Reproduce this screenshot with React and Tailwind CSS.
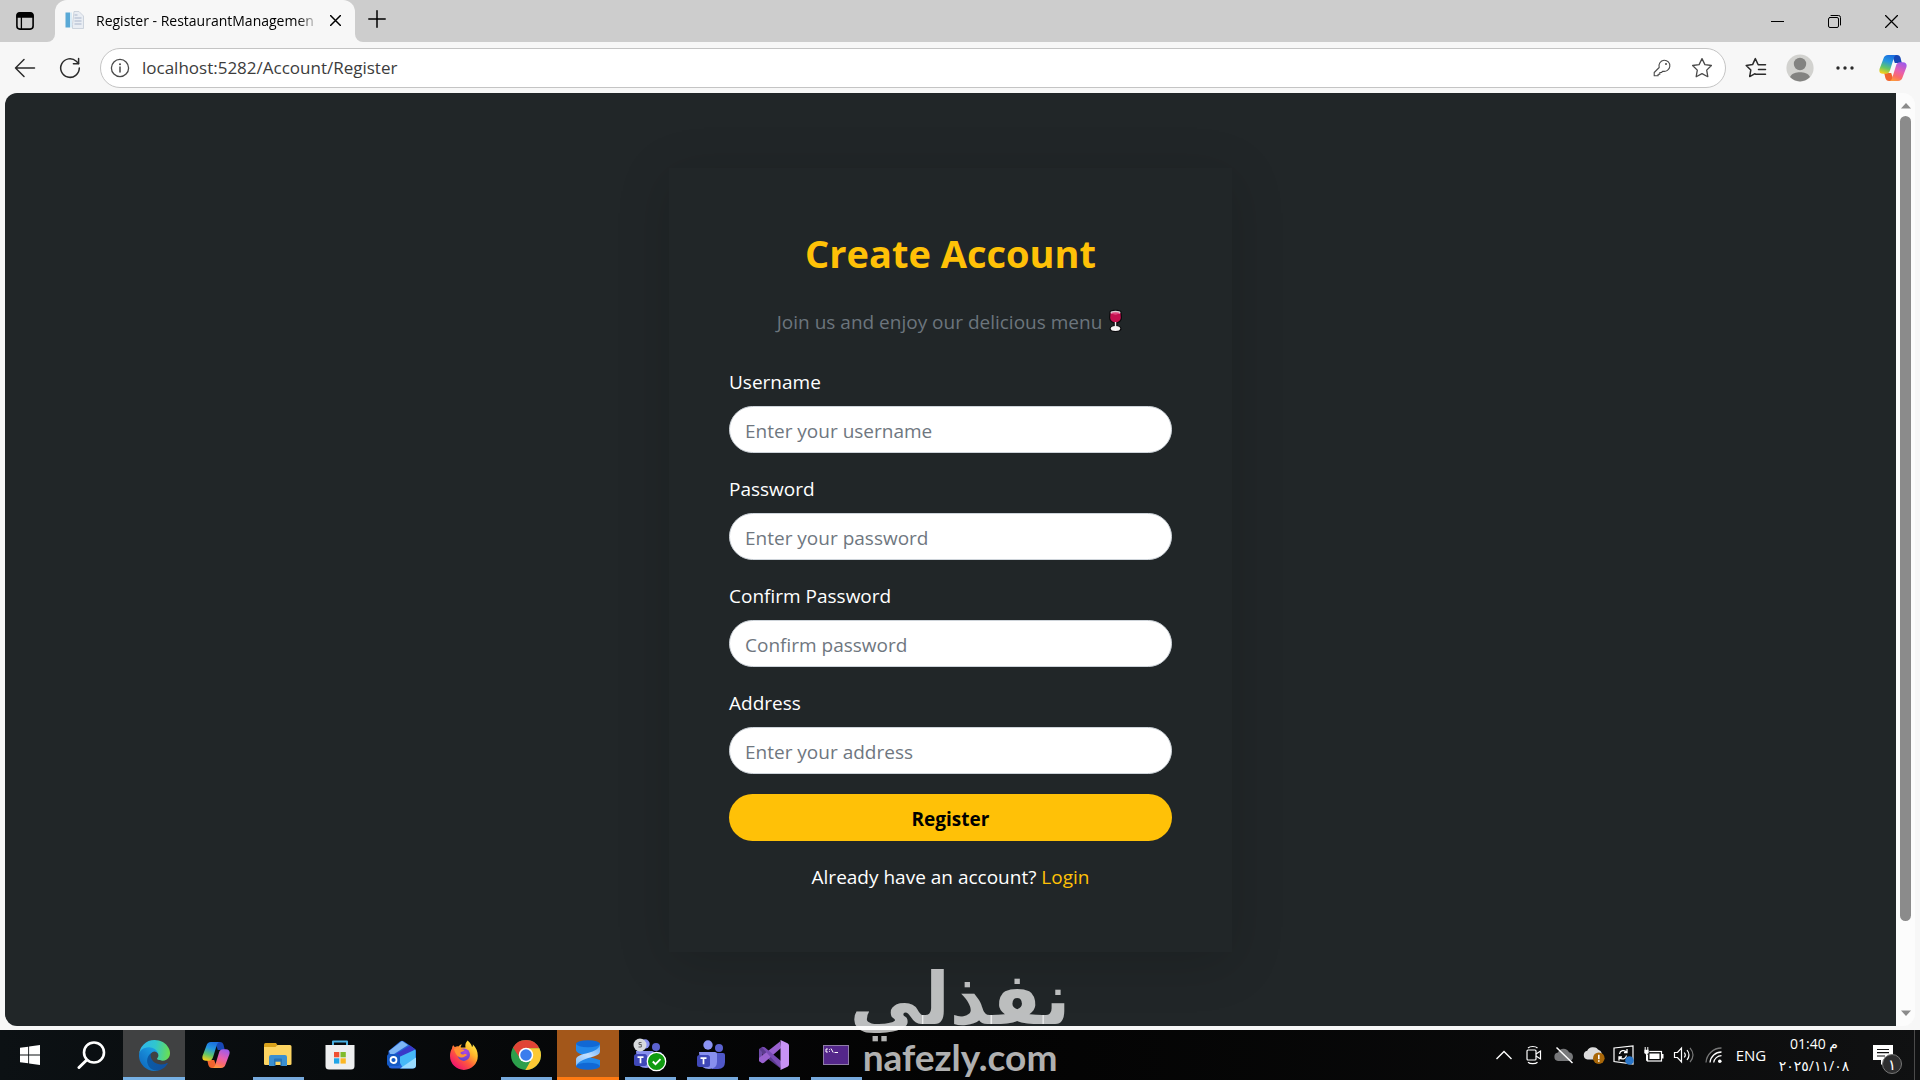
import React from "react";

/* ---------- browser icons ---------- */

const line = { fill: "none", stroke: "currentColor", strokeLinecap: "round", strokeLinejoin: "round" };

const TabActionsIcon = () => (
  <svg width="20" height="20" viewBox="0 0 20 20">
    <rect x="1.9" y="1.9" width="16.2" height="16.2" rx="3" {...line} strokeWidth="1.6" />
    <path d="M1.5 6.8V5a3.6 3.6 0 0 1 3.6-3.6h9.8A3.6 3.6 0 0 1 18.500 5v1.800z" fill="currentColor" />
    <path d="M6.400 6v12" {...line} strokeWidth="1.300" />
  </svg>
);

const Favicon = () => (
  <svg width="20" height="20" viewBox="0 0 20 20">
    <rect x="0.500" y="2.500" width="4.500" height="15" fill="#5aa9d6" />
    <rect x="5" y="2.500" width="2" height="15" fill="#d7ebf7" />
    <path d="M9 1.500h5l4.500 4.500v12.500h-11v-4z" fill="#e9edf3" stroke="#c3cad6" strokeWidth="0.800" />
    <path d="M9.500 5h3M9.500 8h7M9.500 11h7M9.500 14h7" stroke="#a9b6cc" strokeWidth="1.200" />
  </svg>
);

const CloseIcon = ({ size = 11, width = 1.6 }) => (
  <svg width={size} height={size} viewBox="0 0 12 12">
    <path d="M0.500 0.500l11 11M11.500 0.500l-11 11" {...line} strokeWidth={width} />
  </svg>
);

const PlusIcon = () => (
  <svg width="18" height="18" viewBox="0 0 18 18">
    <path d="M9 0.800v16.400M0.800 9h16.400" {...line} strokeWidth="1.500" />
  </svg>
);

const BackIcon = () => (
  <svg width="22" height="20" viewBox="0 0 22 20">
    <path d="M10 1.500L1.500 10l8.500 8.500M1.500 10h19" {...line} strokeWidth="1.500" />
  </svg>
);

const ReloadIcon = () => (
  <svg width="22" height="22" viewBox="0 0 22 22">
    <path d="M20.300 11a9.300 9.300 0 1 1-3-6.800l2.200 2.300" {...line} strokeWidth="1.500" />
    <path d="M19.600 1.500v5.200h-5.200" {...line} strokeWidth="1.500" />
  </svg>
);

const InfoIcon = () => (
  <svg width="20" height="20" viewBox="0 0 20 20">
    <circle cx="10" cy="10" r="8.600" {...line} strokeWidth="1.300" />
    <path d="M10 9v5" {...line} strokeWidth="1.500" />
    <circle cx="10" cy="6.300" r="1" fill="currentColor" />
  </svg>
);

const KeyIcon = () => (
  <svg width="18" height="18" viewBox="0 0 18 18">
    <path
      d="M11 1.200a5.600 5.600 0 1 1-1.200 11l-1.300 1.300H6.800v1.700H5.100v1.600H1.200v-3.300l5-5A5.700 5.700 0 0 1 11 1.200z"
      {...line}
      strokeWidth="1.100"
    />
    <circle cx="13" cy="5" r="1" fill="currentColor" />
  </svg>
);

const StarIcon = () => (
  <svg width="22" height="22" viewBox="0 0 22 22">
    <path
      d="M11 1.600l2.900 6 6.500.9-4.700 4.600 1.100 6.600L11 16.600l-5.800 3.100 1.100-6.600L1.600 8.500l6.500-.9z"
      {...line}
      strokeWidth="1.300"
    />
  </svg>
);

const FavoritesIcon = () => (
  <svg width="22" height="22" viewBox="0 0 22 22">
    <path
      d="M13.200 7.800L10.300 1.600 7.600 7.600l-6.400.9 4.600 4.500-1.100 6.600 5.300-2.900M13.200 7.800h7.300M13.500 12.500h7M10.500 17.200h10"
      {...line}
      strokeWidth="1.500"
    />
  </svg>
);

const AvatarIcon = () => (
  <svg width="28" height="28" viewBox="0 0 28 28">
    <circle cx="14" cy="14" r="13.600" fill="#d2d2cf" />
    <circle cx="14" cy="10" r="6.200" fill="#838381" />
    <path d="M4 23c2-4 6-4.800 10-4.800s8 .8 10 4.800a13.600 13.600 0 0 1-20 0z" fill="#838381" />
  </svg>
);

const CopilotIcon = ({ id, size = 28 }) => (
  <svg width={size} height={size} viewBox="0 0 28 28">
    <defs>
      <linearGradient id={id + "a"} x1="0.600" y1="0" x2="0.300" y2="1">
        <stop offset="0" stopColor="#1b6fe0" />
        <stop offset="0.350" stopColor="#2497e0" />
        <stop offset="0.700" stopColor="#62c667" />
        <stop offset="1" stopColor="#f4cf1c" />
      </linearGradient>
      <linearGradient id={id + "b"} x1="0.700" y1="0" x2="0.300" y2="1">
        <stop offset="0" stopColor="#a05be8" />
        <stop offset="0.450" stopColor="#e75fb0" />
        <stop offset="0.750" stopColor="#fb6a6a" />
        <stop offset="1" stopColor="#fb9a3c" />
      </linearGradient>
    </defs>
    <path d="M13 1h5c2 0 3 1 3.600 3l1.200 5h-7z" fill="#1747b5" />
    <path d="M15 27h-5c-2 0-3-1-3.600-3l-1.200-5h7z" fill="#f0642e" />
    <path d="M9 1H18c-2 .2-2.700 1.400-3.200 3l-3.700 12c-.7 2.400-1.800 3.700-4.300 3.700H4c-3 0-4.200-2-3.400-5L4.400 4.800C5.200 2.200 6.500 1 9 1z" fill={`url(#${id}a)`} />
    <path d="M19 27H10c2-.2 2.700-1.400 3.200-3l3.700-12c.7-2.400 1.800-3.700 4.300-3.700H24c3 0 4.200 2 3.400 5l-3.800 9.900c-.8 2.600-2.100 3.800-4.600 3.800z" fill={`url(#${id}b)`} />
  </svg>
);

const WineIcon = () => (
  <svg className="inline-block align-[-4px]" width="17" height="24" viewBox="0 0 14 24">
    <path d="M1 2.500C2 .3 12 .3 13 2.500l.5 6c0 3-2 5-4.500 5.800v2.200c2.300.4 4 1.700 4 3.500 0 4-12 4-12 0 0-1.800 1.700-3.100 4-3.500v-2.200C2.500 13.500.5 11.500.5 8.500z" fill="#0b0b0d" />
    <path d="M2 4h10l.3 4.500c0 3-2.500 4.800-5.300 4.800S1.700 11.500 1.700 8.500z" fill="#c4104f" />
    <ellipse cx="7" cy="3.500" rx="5" ry="1.700" fill="#d9cfd4" />
    <ellipse cx="7" cy="4.200" rx="3.800" ry="1" fill="#e2427c" />
    <path d="M6.300 13h1.400v5H6.300z" fill="#eee" />
    <ellipse cx="7" cy="19.600" rx="4.700" ry="2.500" fill="#f6f4f5" />
  </svg>
);

/* ---------- taskbar icons ---------- */

const WindowsIcon = () => (
  <svg width="20" height="20" viewBox="0 0 20 20" fill="#fff">
    <path d="M0 2.800L8.200 1.700v7.800H0zM9.100 1.500L20 0v9.500H9.100zM0 10.400h8.200v7.900L0 17.200zM9.100 10.400H20V20L9.100 18.500z" />
  </svg>
);

const SearchIcon = () => (
  <svg width="30" height="30" viewBox="0 0 30 30">
    <circle cx="17" cy="12.500" r="10" fill="none" stroke="#fff" strokeWidth="2.600" />
    <path d="M9.700 20L2 27.500" stroke="#fff" strokeWidth="3" strokeLinecap="round" />
  </svg>
);

const EdgeIcon = () => (
  <svg width="31" height="31" viewBox="0 0 256 256">
    <defs>
      <linearGradient id="edgeA" x1="0.200" y1="0.500" x2="1" y2="0.500">
        <stop offset="0" stopColor="#0c59a4" />
        <stop offset="1" stopColor="#1150a0" />
      </linearGradient>
      <linearGradient id="edgeB" x1="0.800" y1="0.200" x2="0.200" y2="1">
        <stop offset="0" stopColor="#1b9de2" />
        <stop offset="0.500" stopColor="#1580d0" />
        <stop offset="1" stopColor="#0d69bd" />
      </linearGradient>
      <linearGradient id="edgeC" x1="0" y1="0.500" x2="1" y2="0.600">
        <stop offset="0" stopColor="#2fb5ec" />
        <stop offset="0.500" stopColor="#30c6ce" />
        <stop offset="1" stopColor="#6be04d" />
      </linearGradient>
    </defs>
    <path fill="url(#edgeA)" d="M231 190.500c-3.400 1.800-6.900 3.400-10.500 4.700a101.900 101.900 0 0 1-35.900 6.400c-47.300 0-88.500-32.500-88.500-74.300 0-11.400 6.400-21.900 16.400-27.300-42.800 1.800-53.800 46.400-53.800 72.500 0 73.900 68.100 81.400 82.800 81.400 7.900 0 19.800-2.300 27-4.600l1.300-.4a128.300 128.300 0 0 0 66.600-52.800c1.200-1.900.6-4.300-1.200-5.500-1.300-.8-2.900-.9-4.200-.1z" />
    <path fill="url(#edgeB)" d="M105.700 241.400a79.200 79.200 0 0 1-22.700-21.300 80.700 80.700 0 0 1 29.500-120.700c3.100-1.500 8.400-4 15.500-3.900a32.400 32.400 0 0 1 25.700 13 31.900 31.900 0 0 1 6.300 18.700c0-.2 24.500-79.600-80-79.600-43.900 0-80 41.700-80 78.200 0 19.400 4.100 38.500 12.400 56a128 128 0 0 0 156 67.100 75.600 75.600 0 0 1-62.700-7.500z" />
    <path fill="url(#edgeC)" d="M152.300 148.900c-.8 1-3.300 2.500-3.300 5.600 0 2.600 1.700 5.100 4.700 7.200 14.400 10 41.500 8.700 41.600 8.700 10.700 0 21.100-2.900 30.300-8.300a61.400 61.400 0 0 0 30.400-52.900c.3-22.400-8-37.300-11.300-43.900C223.500 24 177.700 0 128 0A128 128 0 0 0 0 126.200c.5-36.500 36.800-66 80-66 3.500 0 23.500.3 42 10 16.300 8.600 24.900 19 30.900 29.300 6.200 10.700 7.300 24.200 7.300 29.500s-2.700 13.400-7.900 19.900z" />
  </svg>
);

const ExplorerIcon = () => (
  <svg width="28" height="26" viewBox="0 0 28 26">
    <path d="M0 2.500Q0 1 1.500 1H12l2 3-2 3H0z" fill="#d9a21b" />
    <path d="M0 5h11.500l2-2H26q1.500 0 1.500 1.500V22q0 1-1.500 1H1.500Q0 23 0 22z" fill="#fcd462" />
    <path d="M5 24V15q0-2 2-2h14q2 0 2 2v9h-5v-4.500h-8V24z" fill="#3b8fd0" />
    <path d="M10 24v-6.500q0-1 1-1h6q1 0 1 1V24h-1.500v-4.500h-5V24z" fill="#2774b8" />
  </svg>
);

const StoreIcon = () => (
  <svg width="30" height="30" viewBox="0 0 30 30">
    <path d="M8 7V1.500h14V7" fill="none" stroke="#49b1e4" strokeWidth="2" strokeLinejoin="round" />
    <path d="M0.500 5h29v21q0 3.500-3.500 3.500H4Q.5 29.500.5 26z" fill="#eeeff0" />
    <path d="M9 12h5.300v5.300H9z" fill="#f05033" />
    <path d="M15.500 12h5.300v5.300h-5.300z" fill="#7fbb2b" />
    <path d="M9 18.300h5.300v5.300H9z" fill="#1fa5e8" />
    <path d="M15.500 18.300h5.300v5.300h-5.300z" fill="#fcb724" />
  </svg>
);

const OutlookIcon = () => (
  <svg width="30" height="30" viewBox="0 0 30 30">
    <path d="M1.500 11L13 1.500q2-1.500 4 0L28 9q1 1 1 2.500V25q0 3.500-3.500 3.500H5Q1.500 28.500 1.500 25z" fill="#2563d9" />
    <path d="M2 11L15 1l6 4L4 16z" fill="#7db6f5" />
    <path d="M4 17L23 5.500l5 3.700L13 20z" fill="#3939c8" />
    <path d="M10 18L28.500 9.500V21L16 28z" fill="#46b9f7" />
    <path d="M13 28.500L29 17.500V25q0 3.500-3.500 3.500z" fill="#9adcff" />
    <rect x="0" y="14" width="13" height="12" rx="2.500" fill="#1459c4" />
    <circle cx="6.500" cy="20" r="3" fill="none" stroke="#fff" strokeWidth="1.800" />
  </svg>
);

const FirefoxIcon = () => (
  <svg width="30" height="30" viewBox="0 0 30 30">
    <defs>
      <linearGradient id="ffA" x1="0.900" y1="0.050" x2="0.200" y2="0.900">
        <stop offset="0" stopColor="#fff44f" />
        <stop offset="0.350" stopColor="#ffb52b" />
        <stop offset="0.650" stopColor="#ff5a3c" />
        <stop offset="1" stopColor="#f0156d" />
      </linearGradient>
      <radialGradient id="ffB" cx="0.600" cy="0.300" r="0.700">
        <stop offset="0" stopColor="#b247e0" />
        <stop offset="1" stopColor="#5b43d0" />
      </radialGradient>
    </defs>
    <path d="M18.500 0.500c3 2.300 4.200 4.600 4.500 6.500 1-.5 1-1.600.8-2.700 3.500 3.500 5 7.500 5 11.700A13.900 13.900 0 0 1 1 16c0-3.500.8-5.500 2-7.500.1-1.500.6-2.600 1.300-3.500.3 1 1 1.800 1.800 2.100.8-.6 2-.9 3.500-.7C11 4.500 12 4.300 13 4.500c-1 1-1.400 2-1.200 2.900h4.700c-.5-2.300 0-4.800 2-6.900z" fill="url(#ffA)" />
    <circle cx="14.800" cy="14.700" r="6.200" fill="url(#ffB)" />
    <path d="M5 9c2.500-1.500 5-1.400 7 .2 1.500 0 3 .2 3.500.8-.5 1.600-3.500 1.700-4 2.600-.3 1.500 1.500 2.400 3.500 1.600 1.300-.4 2.600 0 3 1-1.600.5-3 2.700-6 2.300-4-.5-6-4.500-7-8.500z" fill="#ff9132" />
  </svg>
);

const ChromeIcon = () => (
  <svg width="30" height="30" viewBox="0 0 48 48">
    <circle cx="24" cy="24" r="24" fill="#2c9f4b" />
    <path d="M24 13h21.300A24 24 0 0 0 3.300 12l11.200 17.500z" fill="#e04435" />
    <path d="M45.300 13A24 24 0 0 1 23 48l10.500-18.500L24 13z" fill="#fcc934" />
    <circle cx="24" cy="24" r="11.600" fill="#fff" />
    <circle cx="24" cy="24" r="9.200" fill="#3b7ded" />
  </svg>
);

const ZIcon = () => (
  <svg width="24" height="30" viewBox="0 0 24 30">
    <defs>
      <linearGradient id="zBand" x1="0" y1="1" x2="1" y2="0">
        <stop offset="0" stopColor="#7fbcf9" />
        <stop offset="0.500" stopColor="#c3e0ff" />
        <stop offset="1" stopColor="#5fa9f5" />
      </linearGradient>
    </defs>
    <path d="M0 3.500V10c0 2.500 5 4.500 12 6.500S24 20 24 20v6.500H0V20l12-4.500L24 10V3.500z" fill="#2388ea" />
    <ellipse cx="12" cy="3.700" rx="12" ry="3.500" fill="#1168d4" />
    <ellipse cx="12" cy="26.300" rx="12" ry="3.500" fill="#1168d4" />
    <path d="M24 5v6.500c0 5-11 5.500-17 8.500-3.500 1.600-6 3.500-7 6V19.500c0-4.500 9-5.500 15-7.500 4.500-1.600 8-3.500 9-7z" fill="url(#zBand)" />
  </svg>
);

const TeamsShape = () => (
  <>
    <circle cx="22" cy="8" r="4" fill="#5b62cf" />
    <path d="M15 13h11q2 0 2 2v7q0 7-7 7h-6z" fill="#5058c8" />
    <circle cx="11" cy="5" r="4.700" fill="#8b93f2" />
    <path d="M2 12h16q2 0 2 2v8q0 7-8 7T3 22z" fill="#8890ee" />
    <rect x="0" y="15" width="13" height="12" rx="2.500" fill="#3f48b8" />
    <path d="M3.500 18.200h6M6.500 18.200v6" stroke="#fff" strokeWidth="1.700" />
  </>
);

const TeamsIcon = () => (
  <svg width="30" height="30" viewBox="0 0 30 30">
    <TeamsShape />
  </svg>
);

const TeamsStatusIcon = () => (
  <svg width="34" height="34" viewBox="0 0 34 34">
    <g transform="translate(1 1)">
      <TeamsShape />
    </g>
    <circle cx="7" cy="7" r="6.500" fill="#d8dadd" />
    <path d="M8.500 4.500H6v2h2.300v2.500H5.500" fill="none" stroke="#555" strokeWidth="0.900" />
    <circle cx="23.500" cy="23.500" r="9.200" fill="#109b10" stroke="#fff" strokeWidth="1.300" />
    <path d="M19.800 23.500l2.700 2.700 5-5" fill="none" stroke="#fff" strokeWidth="1.900" />
  </svg>
);

const VisualStudioIcon = () => (
  <svg width="30" height="30" viewBox="0 0 30 30">
    <path d="M0 9l3-2q1-.5 2 .3L22 22l-1 6L0 12z" fill="#5b3a8e" />
    <path d="M0 9v12l3 2V12z" fill="#6e4aa8" />
    <path d="M0 21l3 2q1 .5 2-.3L22 8l-1-6.500L0 18z" fill="#9a62d0" />
    <path d="M3 7.500L21.500 28 22 21 6 7.500Q4.500 6.500 3 7.500z" fill="#7a4cb5" />
    <path d="M21.500 0l7 3.300q1.500.7 1.500 2.200v19q0 1.500-1.500 2.200l-7 3.300z" fill="#c893f5" />
  </svg>
);

const TerminalIcon = () => (
  <svg width="26" height="20" viewBox="0 0 26 20">
    <rect x="0.500" y="0.500" width="25" height="19" fill="#54278a" stroke="#8f7da6" />
    <path d="M4.800 4H3v3h1.800M6.500 4.300v.8M6.500 6.200v.8M8 3.500l2.200 4M11.500 7.500h3.500" stroke="#fff" fill="none" />
  </svg>
);

/* ---------- tray icons ---------- */

const ChevronIcon = () => (
  <svg width="18" height="12" viewBox="0 0 18 12">
    <path d="M1.500 10L9 2.500l7.500 7.500" fill="none" stroke="#fff" strokeWidth="1.400" />
  </svg>
);

const MeetNowIcon = () => (
  <svg width="18" height="20" viewBox="0 0 18 20" fill="none" stroke="#fff" strokeWidth="1.200">
    <rect x="2" y="5" width="9" height="10" rx="1" />
    <path d="M11 9l4.500-3v8L11 11M3 3c2-2 7.500-2 9.500 0M3 17.200c2 1.900 7.500 1.900 9.500 0" />
  </svg>
);

const CloudOffIcon = () => (
  <svg width="22" height="18" viewBox="0 0 22 18">
    <path d="M5 15a4.300 4.300 0 0 1 0-8.500A6 6 0 0 1 16 6.300 4.500 4.500 0 0 1 17 15z" fill="#77787a" />
    <path d="M3.500 1.500l16 15.500" stroke="#fff" strokeWidth="1.500" />
  </svg>
);

const CloudWarnIcon = () => (
  <svg width="24" height="20" viewBox="0 0 24 20">
    <path d="M5.500 14.500a4.500 4.500 0 0 1-.3-8.800A6.500 6.500 0 0 1 16 4.500q3 1 4 4l-6 6z" fill="#dcdcdc" />
    <circle cx="16.800" cy="13.200" r="5.800" fill="#a96708" />
    <path d="M16.800 9.700v4.500M16.800 15.200v1.600" stroke="#fff" strokeWidth="1.600" />
  </svg>
);

const UpdateIcon = () => (
  <svg width="22" height="20" viewBox="0 0 22 20">
    <path d="M1 3l19-2v18L1 16.500z" fill="none" stroke="#fff" strokeWidth="1.200" />
    <path d="M6.500 9a4 4 0 0 1 7-2M14 4v3.500h-3M13.500 10.500a4 4 0 0 1-7 2M6 15.500V12h3" fill="none" stroke="#fff" strokeWidth="1.300" />
    <circle cx="16.500" cy="15.500" r="4.300" fill="#2b77c9" />
  </svg>
);

const BatteryIcon = () => (
  <svg width="22" height="16" viewBox="0 0 22 16">
    <rect x="4.500" y="4.500" width="14" height="9.500" fill="none" stroke="#fff" strokeWidth="1.200" />
    <path d="M6.500 6.500h10v5.500h-10zM19 7h1.500v4.500H19z" fill="#fff" />
    <path d="M1 2.500h5v3q0 2-2.500 2T1 5.500z" fill="#fff" stroke="#0b0c0d" strokeWidth="0.600" />
    <path d="M2.200 0v3M4.800 0v3M3.500 7v6.500h1" stroke="#fff" fill="none" />
  </svg>
);

const VolumeIcon = () => (
  <svg width="22" height="18" viewBox="0 0 22 18" fill="none" stroke="#fff" strokeWidth="1.200">
    <path d="M1.500 6.500h3l4-4.500v14l-4-4.500h-3z" />
    <path d="M11.300 6.500q2 2.500 0 5M14 4q4 5 0 10" />
    <path d="M17 1.800q6 7.200 0 14.400" stroke="#777" />
  </svg>
);

const WifiIcon = () => (
  <svg width="18" height="18" viewBox="0 0 18 18" fill="none" strokeWidth="1.300">
    <path d="M1 16.500A15.500 15.500 0 0 1 16.500 2" stroke="#777" />
    <path d="M5 16.500A11.500 11.500 0 0 1 16.500 6M8.700 16.500a7.800 7.800 0 0 1 7.800-6.800" stroke="#fff" />
    <circle cx="14.800" cy="15.200" r="1.800" fill="#fff" />
  </svg>
);

const NotificationIcon = () => (
  <svg width="20" height="20" viewBox="0 0 20 20">
    <path d="M0 0h20v15h-7l-5 5v-5H0z" fill="#fff" />
    <path d="M4 4.500h12M4 7.700h12M4 11h8" stroke="#111" strokeWidth="1.200" />
  </svg>
);

/* ---------- data ---------- */

const fields = [
  { id: "username", label: "Username", placeholder: "Enter your username", type: "text" },
  { id: "password", label: "Password", placeholder: "Enter your password", type: "password" },
  { id: "confirm", label: "Confirm Password", placeholder: "Confirm password", type: "password" },
  { id: "address", label: "Address", placeholder: "Enter your address", type: "text" },
];

const apps = [
  { name: "Start", icon: <WindowsIcon /> },
  { name: "Search", icon: <SearchIcon /> },
  { name: "Edge", icon: <EdgeIcon />, state: "active" },
  { name: "Copilot", icon: <CopilotIcon id="task" /> },
  { name: "File Explorer", icon: <ExplorerIcon />, state: "open" },
  { name: "Store", icon: <StoreIcon /> },
  { name: "Outlook", icon: <OutlookIcon /> },
  { name: "Firefox", icon: <FirefoxIcon /> },
  { name: "Chrome", icon: <ChromeIcon />, state: "open" },
  { name: "Z", icon: <ZIcon />, state: "alert" },
  { name: "Teams (work)", icon: <TeamsStatusIcon />, state: "open" },
  { name: "Teams", icon: <TeamsIcon />, state: "open" },
  { name: "Visual Studio", icon: <VisualStudioIcon />, state: "open" },
  { name: "Command Prompt", icon: <TerminalIcon />, state: "open" },
];

const tray = [
  { name: "Show hidden icons", icon: <ChevronIcon /> },
  { name: "Meet now", icon: <MeetNowIcon /> },
  { name: "Cloud paused", icon: <CloudOffIcon /> },
  { name: "Cloud warning", icon: <CloudWarnIcon /> },
  { name: "Updates", icon: <UpdateIcon /> },
  { name: "Battery", icon: <BatteryIcon /> },
  { name: "Volume", icon: <VolumeIcon /> },
  { name: "Network", icon: <WifiIcon /> },
];

/* ---------- sections ---------- */

function TabStrip() {
  return (
    <header className="flex h-[42px] shrink-0 items-stretch bg-[#cdcdcd] text-black">
      <div className="flex w-[55px] bg-[#f7f7f7]">
        <button aria-label="Tab actions" className="flex w-full items-center justify-center rounded-br-lg bg-[#cdcdcd] pr-[6px]">
          <TabActionsIcon />
        </button>
      </div>
      <div className="bg-[#cdcdcd]">
        <div className="flex h-full w-[300px] items-center rounded-t-xl bg-[#f7f7f7] pr-[10px] pb-[2px] pl-[10px]">
          <Favicon />
          <span className="ml-[11px] w-[224px] overflow-hidden text-[14px] whitespace-nowrap [mask-image:linear-gradient(to_right,black_90%,transparent)]">
            Register - RestaurantManagemen
          </span>
          <button aria-label="Close tab" className="ml-auto flex size-5 items-center justify-center">
            <CloseIcon />
          </button>
        </div>
      </div>
      <div className="flex flex-1 bg-[#f7f7f7]">
        <div className="flex flex-1 items-stretch justify-between rounded-bl-lg bg-[#cdcdcd]">
          <button aria-label="New tab" className="flex w-11 items-center justify-center pb-1">
            <PlusIcon />
          </button>
          <div className="flex">
            <button aria-label="Minimize" className="flex w-[57px] items-center justify-center">
              <svg width="13" height="13" viewBox="0 0 13 13">
                <path d="M0 6.500h13" stroke="currentColor" />
              </svg>
            </button>
            <button aria-label="Restore" className="flex w-[57px] items-center justify-center">
              <svg width="13" height="13" viewBox="0 0 13 13">
                <rect x="0.500" y="2.500" width="10" height="10" rx="1.500" {...line} />
                <path d="M3 .5h7.500q2 0 2 2V10" {...line} />
              </svg>
            </button>
            <button aria-label="Close window" className="flex w-[57px] items-center justify-center">
              <CloseIcon size={13} width={1.1} />
            </button>
          </div>
        </div>
      </div>
    </header>
  );
}

function Toolbar() {
  return (
    <div className="flex h-[51px] shrink-0 items-center bg-[#f7f7f7] text-[#2b2b2b]">
      <button aria-label="Back" className="flex w-[50px] justify-center">
        <BackIcon />
      </button>
      <button aria-label="Reload" className="flex w-10 justify-center">
        <ReloadIcon />
      </button>
      <div className="ml-[10px] flex h-10 flex-1 items-center rounded-full border border-[#c4c4c4] bg-white pr-[3px] pl-[9px]">
        <span className="text-[#4a4a4a]">
          <InfoIcon />
        </span>
        <input
          aria-label="Address bar"
          defaultValue="localhost:5282/Account/Register"
          className="ml-3 min-w-0 flex-1 bg-transparent text-[17px] text-[#3c3c3c] outline-none"
        />
        <button aria-label="Saved passwords" className="flex w-10 justify-center text-[#4a4a4a]">
          <KeyIcon />
        </button>
        <button aria-label="Add to favorites" className="flex w-10 justify-center text-[#4a4a4a]">
          <StarIcon />
        </button>
      </div>
      <button aria-label="Favorites" className="ml-2 flex w-11 justify-center">
        <FavoritesIcon />
      </button>
      <button aria-label="Profile" className="flex w-11 justify-center">
        <AvatarIcon />
      </button>
      <button aria-label="More" className="flex w-[46px] justify-center">
        <svg width="18" height="4" viewBox="0 0 18 4" fill="currentColor">
          <circle cx="2" cy="2" r="1.700" />
          <circle cx="9" cy="2" r="1.700" />
          <circle cx="16" cy="2" r="1.700" />
        </svg>
      </button>
      <button aria-label="Copilot" className="mr-[2px] flex w-[50px] justify-center">
        <CopilotIcon id="bar" />
      </button>
    </div>
  );
}

function RegisterCard() {
  return (
    <section className="w-full max-w-[563px] bg-[#212628] p-[60px] text-[19px] leading-[30px] text-white shadow-[0_10px_50px_rgba(0,0,0,0.16)]">
      <h1 className="text-center text-[38px] leading-[50px] font-bold text-[#ffc107]">Create Account</h1>
      <p className="my-[29px] text-center text-[#6c757d]">
        Join us and enjoy our delicious menu <WineIcon />
      </p>
      <form onSubmit={(e) => e.preventDefault()}>
        {fields.map((f) => (
          <div key={f.id} className="mb-5">
            <label htmlFor={f.id} className="mb-[9px] block pt-px">
              {f.label}
            </label>
            <input
              id={f.id}
              type={f.type}
              placeholder={f.placeholder}
              className="block h-[47px] w-full rounded-full border border-[#ced4da] bg-white px-[15px] pt-[2px] text-[#212529] placeholder:text-[#6f777f]"
            />
          </div>
        ))}
        <button type="submit" className="h-[47px] w-full rounded-full bg-[#ffc107] pt-[2px] font-bold text-black">
          Register
        </button>
      </form>
      <p className="mt-[21px] text-center">
        Already have an account?{" "}
        <a href="#login" className="text-[#ffc107]">
          Login
        </a>
      </p>
    </section>
  );
}

function Scrollbar() {
  return (
    <div className="flex w-[19px] shrink-0 flex-col items-center rounded-r-xl bg-[#fcfcfc] py-2">
      <svg width="10" height="8" viewBox="0 0 10 8">
        <path d="M0 7.500L5 2l5 5.500z" fill="#8b8b8b" />
      </svg>
      <div className="mt-[7px] mb-[89px] w-[11px] flex-1 rounded-full bg-[#8b8b8b]" />
      <svg width="10" height="8" viewBox="0 0 10 8">
        <path d="M0 .5L5 6l5-5.500z" fill="#8b8b8b" />
      </svg>
    </div>
  );
}

function TaskButton({ app }) {
  const bg =
    app.state === "active" ? "bg-[#404142]" : app.state === "alert" ? "bg-[#a3571a]" : "bg-transparent";
  const bar =
    app.state === "active"
      ? "w-full bg-[#76b0e4]"
      : app.state === "open"
        ? "w-[51px] bg-[#76a9dc]"
        : app.state === "alert"
          ? "w-full bg-[#ff7a12]"
          : "w-0";
  return (
    <button aria-label={app.name} className={`flex w-[62px] flex-col items-center ${bg}`}>
      <span className="flex flex-1 items-center pt-[3px]">{app.icon}</span>
      <span className={`h-[3px] ${bar}`} />
    </button>
  );
}

function Taskbar() {
  return (
    <footer className="flex h-[50px] shrink-0 justify-between bg-[#08090a] bg-gradient-to-r from-[#0c1114] via-[#030303] to-[#101112] text-white">
      <nav aria-label="Taskbar" className="-ml-px flex">
        {apps.map((a) => (
          <TaskButton key={a.name} app={a} />
        ))}
      </nav>
      <div className="flex items-center">
        {tray.map((t) => (
          <button key={t.name} aria-label={t.name} className="flex w-[30px] justify-center">
            {t.icon}
          </button>
        ))}
        <button className="w-11 text-center text-[15px]">ENG</button>
        <button className="w-[82px] text-center font-['Open_Sans','DejaVu_Sans',sans-serif] text-[14px] leading-[22px]">
          <span className="block">01:40 م</span>
          <span className="block [direction:ltr] [unicode-bidi:bidi-override]">٢٠٢٥/١١/٠٨</span>
        </button>
        <button aria-label="Notifications" className="relative mr-1 flex w-[55px] justify-center">
          <NotificationIcon />
          <span className="absolute top-[9px] left-[27px] flex size-5 items-center justify-center rounded-full border border-[#777] bg-[#2e2e2f] text-[15px]">
            ١
          </span>
        </button>
        <span className="mr-[5px] h-full w-px bg-[#4a4a4a]" />
      </div>
    </footer>
  );
}

function Watermark() {
  return (
    <div className="pointer-events-none absolute bottom-[2px] left-1/2 flex -translate-x-1/2 flex-col items-center whitespace-nowrap text-white/70">
      <span className="font-['DejaVu_Sans',sans-serif] text-[72px] leading-[74px] font-bold" dir="rtl" lang="ar">
        نفذلي
      </span>
      <span className="font-['Lato',sans-serif] text-[37px] leading-[42px] font-bold">nafezly.com</span>
    </div>
  );
}

export default function App() {
  return (
    <div className="relative flex h-screen flex-col overflow-hidden bg-[#f7f7f7] font-['Open_Sans','Noto_Sans','DejaVu_Sans',sans-serif]">
      <TabStrip />
      <Toolbar />
      <div className="mr-[5px] mb-1 ml-[5px] flex min-h-0 flex-1">
        <main className="flex min-w-0 flex-1 items-start justify-center overflow-hidden rounded-l-xl bg-[#212628] pt-[75px]">
          <RegisterCard />
        </main>
        <Scrollbar />
      </div>
      <Taskbar />
      <Watermark />
    </div>
  );
}
